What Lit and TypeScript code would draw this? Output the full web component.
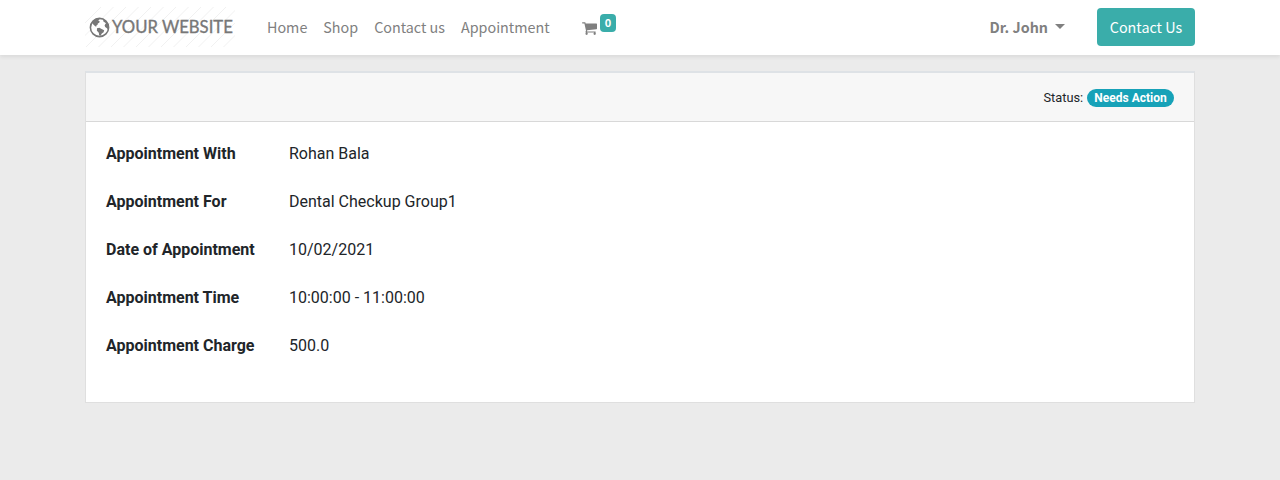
import { LitElement, html, css, svg } from "lit";
import { customElement } from "lit/decorators.js";

@customElement("site-logo")
class SiteLogo extends LitElement {
  static styles = css`
    :host { display: flex; align-items: center; width: 150px; height: 40px; box-sizing: border-box; padding-left: 4px; position: relative; color: #777; }
    .hatch { position: absolute; inset: 0; width: 150px; height: 40px; }
    .globe { width: 21px; height: 21px; flex: none; position: relative; }
    .name { font: 400 16.7px/22px Lato, sans-serif; white-space: nowrap; margin: 0 0 0 2px; position: relative; -webkit-text-stroke: 0.35px #777; }
  `;
  render() {
    const lines = Array.from({ length: 16 }, (_, i) => i * 12.5 - 2);
    return html`
      <svg class="hatch" viewBox="0 0 150 40">
        ${lines.map((x) => svg`<path d="M${x - 22} 40 L${x + 18} 0" stroke="#f1f1f1" stroke-width="1" />`)}
      </svg>
      <svg class="globe" viewBox="0 0 21 21">
        <circle cx="10.5" cy="10.5" r="9.1" fill="#fff" stroke="#777" stroke-width="1.6" />
        <path fill="#777" d="M2.8 5.6 C4.4 3 6.8 1.3 9.6 1.3 L10.6 2.4 L9.2 3.4 L10.8 4.6 L10.2 5.8 L8.8 6.5 L8.6 7.8 L7.4 8.6 L7.2 9.7 L5.8 9.1 L5.2 8.2 L4 7.2Z M8 11.2 L10.4 10.8 L12.6 11.9 L15.2 13.2 L14.6 15.3 L12.8 16.6 L11.6 18.8 L10.2 18.6 L9.8 15.8 L7.9 13.7Z M14.2 2.2 C17.8 3.8 19.8 6.9 19.7 10.5 L19 12.2 L17.6 10.9 L16.2 9.9 L15.6 8.5 L16.2 7.2 L17 6.2 L15.6 5.2 L14.4 4.4Z" />
      </svg>
      <span class="name">YOUR WEBSITE</span>
    `;
  }
}

@customElement("site-nav")
class SiteNav extends LitElement {
  static styles = css`
    :host { display: block; background: #fff; height: 55px; box-shadow: 0 2px 4px rgba(0, 0, 0, 0.075); position: relative;
      font: 400 14.34px/24px "Noto Sans CJK SC", sans-serif; color: #808080; }
    .bar { width: 1110px; height: 54px; margin: 0 auto; display: flex; align-items: center; white-space: nowrap; }
    .links { display: flex; gap: 16px; margin-left: 32px; }
    .cart { display: flex; align-items: flex-start; height: 27px; margin-left: 32.4px; }
    .cart svg { width: 15px; height: 14px; margin-top: 7px; }
    .count { margin-left: 3px; width: 16px; height: 18px; border-radius: 4px; background: #3aadaa; color: #fff; font-weight: 700; font-size: 11px; line-height: 17px; text-align: center; }
    .user { margin-left: auto; font-weight: 700; display: flex; align-items: center; }
    .caret { margin-left: 7px; margin-bottom: 2px; border: 5px solid transparent; border-top-color: #808080; border-bottom: 0; }
    .btn { margin-left: 32px; width: 98px; height: 38px; border-radius: 4px; background: #3aadaa; color: #fff; line-height: 38px; text-align: center; }
  `;
  render() {
    return html`
      <nav class="bar">
        <site-logo></site-logo>
        <div class="links">
          ${["Home", "Shop", "Contact us", "Appointment"].map((t) => html`<span>${t}</span>`)}
        </div>
        <div class="cart">
          <svg viewBox="0 0 1664 1536" fill="#808080"><path d="M640 1408c0 70-58 128-128 128s-128-58-128-128 58-128 128-128 128 58 128 128zm896 0c0 70-58 128-128 128s-128-58-128-128 58-128 128-128 128 58 128 128zm128-1088v512c0 32-25 60-57 64L563 1018c5 23 13 46 13 70 0 23-14 44-24 64h920c35 0 64 29 64 64s-29 64-64 64H448c-35 0-64-29-64-64 0-31 45-106 61-137L268 256H64c-35 0-64-29-64-64s29-64 64-64h256c67 0 69 80 79 128h1201c35 0 64 29 64 64z" /></svg>
          <span class="count">0</span>
        </div>
        <div class="user"><span>Dr. John</span><i class="caret"></i></div>
        <div class="btn">Contact Us</div>
      </nav>
    `;
  }
}

@customElement("appointment-card")
class AppointmentCard extends LitElement {
  static styles = css`
    :host { display: block; box-sizing: border-box; width: 1110px; height: 332px; margin: 16px auto 0; background: #fff;
      border: 1px solid #dfdfdf; border-top: 2px solid #dee2e6; font: 400 16px/24px Roboto, sans-serif; color: #212529; }
    .head { box-sizing: border-box; height: 49px; padding: 2px 20px 0 0; background: #f7f7f7; border-bottom: 1px solid #d8d8d8; display: flex; align-items: center; justify-content: flex-end; font-size: 12.8px; }
    .pill { margin-left: 3.8px; width: 87px; height: 18px; border-radius: 9px; background: #17a2b8; color: #fff; font-weight: 700; font-size: 12px; line-height: 18px; text-align: center; }
    .rows { display: grid; grid-template-columns: 183px 1fr; row-gap: 24px; padding: 20px; }
    .label { font-weight: 700; }
  `;
  render() {
    const rows = [
      ["Appointment With", "Rohan Bala"],
      ["Appointment For", "Dental Checkup Group1"],
      ["Date of Appointment", "10/02/2021"],
      ["Appointment Time", "10:00:00 - 11:00:00"],
      ["Appointment Charge", "500.0"],
    ];
    return html`
      <div class="head"><span>Status:</span><span class="pill">Needs Action</span></div>
      <div class="rows">
        ${rows.map(([label, value]) => html`<span class="label">${label}</span><span>${value}</span>`)}
      </div>
    `;
  }
}

@customElement("app-root")
class AppRoot extends LitElement {
  static styles = css`
    :host { display: flow-root; height: 480px; background: #ebebeb; overflow: hidden; }
  `;
  render() {
    return html`<site-nav></site-nav><appointment-card></appointment-card>`;
  }
}
